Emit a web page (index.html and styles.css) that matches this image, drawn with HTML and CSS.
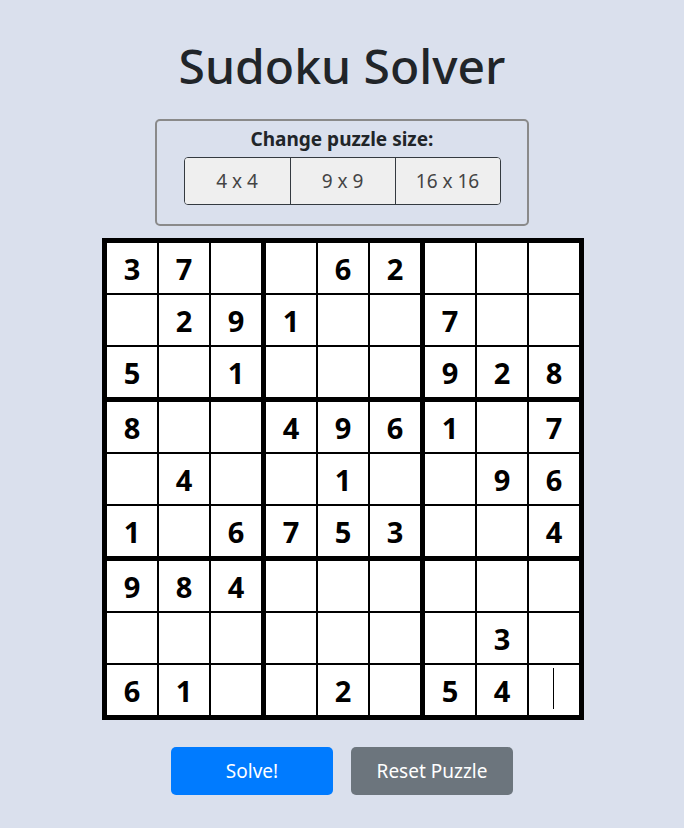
FILE: index.html
```html
<!DOCTYPE html>
<html lang="en">
<head>
<meta charset="utf-8">
<title>Sudoku Solver</title>
<link rel="stylesheet" href="styles.css">
</head>
<body>
<main class="app">
  <h1 class="title">Sudoku Solver</h1>
  <section class="size-box">
    <div class="size-label">Change puzzle size:</div>
    <div class="btn-group">
      <button class="size-btn">4 x 4</button>
      <button class="size-btn">9 x 9</button>
      <button class="size-btn">16 x 16</button>
    </div>
  </section>
  <div class="board">
    <div class="box"><div class="cell">3</div><div class="cell">7</div><div class="cell"></div><div class="cell"></div><div class="cell">2</div><div class="cell">9</div><div class="cell">5</div><div class="cell"></div><div class="cell">1</div></div>
    <div class="box"><div class="cell"></div><div class="cell">6</div><div class="cell">2</div><div class="cell">1</div><div class="cell"></div><div class="cell"></div><div class="cell"></div><div class="cell"></div><div class="cell"></div></div>
    <div class="box"><div class="cell"></div><div class="cell"></div><div class="cell"></div><div class="cell">7</div><div class="cell"></div><div class="cell"></div><div class="cell">9</div><div class="cell">2</div><div class="cell">8</div></div>
    <div class="box"><div class="cell">8</div><div class="cell"></div><div class="cell"></div><div class="cell"></div><div class="cell">4</div><div class="cell"></div><div class="cell">1</div><div class="cell"></div><div class="cell">6</div></div>
    <div class="box"><div class="cell">4</div><div class="cell">9</div><div class="cell">6</div><div class="cell"></div><div class="cell">1</div><div class="cell"></div><div class="cell">7</div><div class="cell">5</div><div class="cell">3</div></div>
    <div class="box"><div class="cell">1</div><div class="cell"></div><div class="cell">7</div><div class="cell"></div><div class="cell">9</div><div class="cell">6</div><div class="cell"></div><div class="cell"></div><div class="cell">4</div></div>
    <div class="box"><div class="cell">9</div><div class="cell">8</div><div class="cell">4</div><div class="cell"></div><div class="cell"></div><div class="cell"></div><div class="cell">6</div><div class="cell">1</div><div class="cell"></div></div>
    <div class="box"><div class="cell"></div><div class="cell"></div><div class="cell"></div><div class="cell"></div><div class="cell"></div><div class="cell"></div><div class="cell"></div><div class="cell">2</div><div class="cell"></div></div>
    <div class="box"><div class="cell"></div><div class="cell"></div><div class="cell"></div><div class="cell"></div><div class="cell">3</div><div class="cell"></div><div class="cell">5</div><div class="cell">4</div><div class="cell cell-focus"><span class="caret"></span></div></div>
  </div>
  <div class="actions">
    <button class="btn btn-primary">Solve!</button>
    <button class="btn btn-secondary">Reset Puzzle</button>
  </div>
</main>
</body>
</html>
```
FILE: styles.css
```css
html, body {
  margin: 0;
  padding: 0;
  background: #dae0ed;
}
body {
  font-family: "Noto Sans", "Open Sans", sans-serif;
  color: #212529;
}
.app {
  display: flex;
  flex-direction: column;
  align-items: center;
}
.title {
  margin: 35px 0 0;
  font-size: 48px;
  line-height: 62px;
  font-weight: 500;
  color: #212529;
}
.size-box {
  margin-top: 22px;
  width: 374px;
  box-sizing: border-box;
  border: 2px solid #8a8a8a;
  border-radius: 5px;
  padding: 4px 0 19px;
  display: flex;
  flex-direction: column;
  align-items: center;
}
.size-label {
  font-size: 19px;
  font-weight: 700;
  line-height: 28px;
  margin-bottom: 4px;
}
.btn-group {
  display: flex;
  border: 1px solid #343a40;
  border-radius: 4px;
  overflow: hidden;
  background: #efefef;
}
.size-btn {
  width: 105px;
  height: 46px;
  border: none;
  border-left: 1px solid #343a40;
  background: #efefef;
  color: #444;
  font-family: "Noto Sans", "Open Sans", sans-serif;
  font-size: 19px;
  padding: 0;
}
.size-btn:first-child {
  border-left: none;
}
.board {
  margin-top: 12px;
  margin-left: 2px;
  display: grid;
  grid-template-columns: repeat(3, 154px);
  gap: 5px;
  padding: 5px;
  background: #000;
}
.box {
  display: grid;
  grid-template-columns: repeat(3, 50px);
  grid-auto-rows: 50px;
  gap: 2px;
  background: #000;
}
.cell {
  position: relative;
  background: #fff;
  box-sizing: border-box;
  height: 50px;
  padding-top: 1px;
  text-align: center;
  font-size: 29px;
  font-weight: 700;
  line-height: 50px;
  color: #000;
  overflow: hidden;
}
.caret {
  position: absolute;
  left: 24px;
  top: 3px;
  width: 1px;
  height: 41px;
  background: #000;
}
.actions {
  margin-top: 27px;
  display: flex;
  gap: 18px;
}
.btn {
  width: 162px;
  height: 48px;
  border: none;
  border-radius: 5px;
  color: #fff;
  font-family: "Noto Sans", "Open Sans", sans-serif;
  font-size: 19px;
  padding: 0;
}
.btn-primary {
  background: #007bff;
}
.btn-secondary {
  background: #6c757d;
}
```
